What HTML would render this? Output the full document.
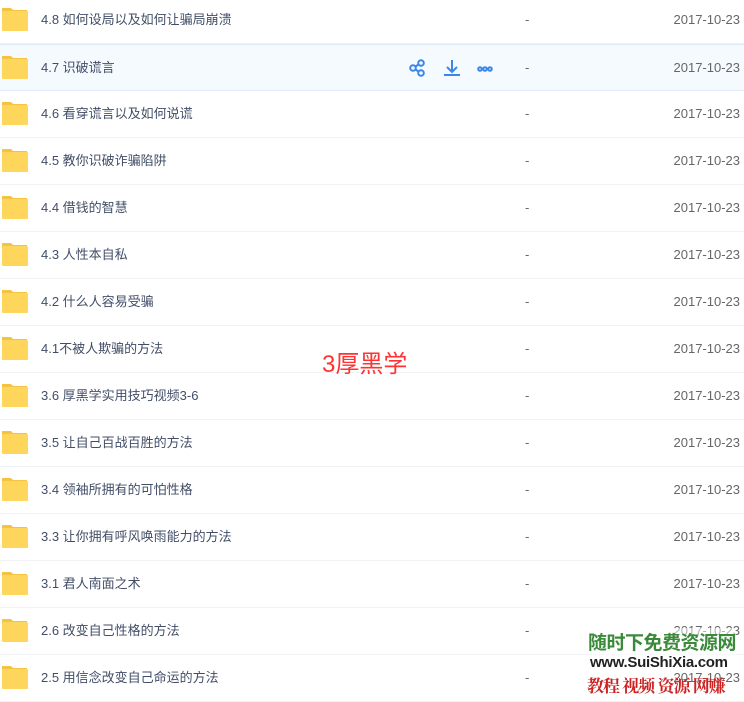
<!DOCTYPE html><html><head><meta charset="utf-8"><style>
body{margin:0;width:744px;height:694px;overflow:hidden;background:#fff;font-family:"Liberation Sans","Noto Sans CJK SC",sans-serif;position:relative}
.r{position:absolute;left:0;width:744px;height:47px;box-sizing:border-box;border-bottom:1px solid #f0f2f5}
.r.h{background:#f5faff;border-top:1px solid #dfeaf8;border-bottom:1px solid #dfeaf8}
.f{position:absolute;left:1px;top:10px;width:27px;height:24px}
.n,.d,.t{position:absolute;top:0;line-height:46px;font-size:13px}
.n{left:41px;color:#424e67}
.d{left:525px;color:#666}
.t{right:4px;color:#666}
</style></head><body>
<div id="c"></div>
<script>
var names=["4.8 如何设局以及如何让骗局崩溃","4.7 识破谎言","4.6 看穿谎言以及如何说谎","4.5 教你识破诈骗陷阱","4.4 借钱的智慧","4.3 人性本自私","4.2 什么人容易受骗","4.1不被人欺骗的方法","3.6 厚黑学实用技巧视频3-6","3.5 让自己百战百胜的方法","3.4 领袖所拥有的可怕性格","3.3 让你拥有呼风唤雨能力的方法","3.1 君人南面之术","2.6 改变自己性格的方法","2.5 用信念改变自己命运的方法"];
var h="";
names.forEach(function(n,i){
var top=-3+i*47;
h+='<div class="r'+(i==1?' h':'')+'" style="top:'+top+'px"><svg class="f" viewBox="0 0 27 24"><path d="M1 1h9l2 2h14v20H1z" fill="#f5c343"/><rect x="1" y="4" width="26" height="20" rx="1" fill="#ffd65c"/></svg><div class="n">'+n+'</div><div class="d">-</div><div class="t">2017-10-23</div>'+
(i==1?'<svg style="position:absolute;left:409px;top:14px" width="90" height="18" viewBox="0 0 90 18"><g fill="none" stroke="#3b86e8" stroke-width="2"><circle cx="4" cy="9" r="2.8"/><circle cx="12" cy="4" r="2.8"/><circle cx="12" cy="14" r="2.8"/><path d="M6.5 7.5l3-2M6.5 10.5l3 2"/><path d="M43 1v11M38 8l5 5 5-5M35 16h16"/><circle cx="71" cy="10" r="1.8"/><circle cx="76" cy="10" r="1.8"/><circle cx="81" cy="10" r="1.8"/></g></svg>':'')+'</div>';
});
document.getElementById('c').innerHTML=h;
</script>
<div style="position:absolute;left:322px;top:344px;font-size:24px;color:#f33">3厚黑学</div>
<div style="position:absolute;left:588px;top:628px;font-size:19px;font-weight:bold;color:#3a8a3a;letter-spacing:-0.5px;background:rgba(255,255,255,0.5)">随时下免费资源网</div>
<div style="position:absolute;left:590px;top:654px;font-size:15px;font-weight:bold;color:#222;letter-spacing:-0.3px">www.SuiShiXia.com</div>
<div style="position:absolute;left:587px;top:672px;font-size:17px;font-weight:bold;color:#c22;font-family:'Noto Serif CJK SC',serif;letter-spacing:-1px">教程 视频 资源 网赚</div>
</body></html>
